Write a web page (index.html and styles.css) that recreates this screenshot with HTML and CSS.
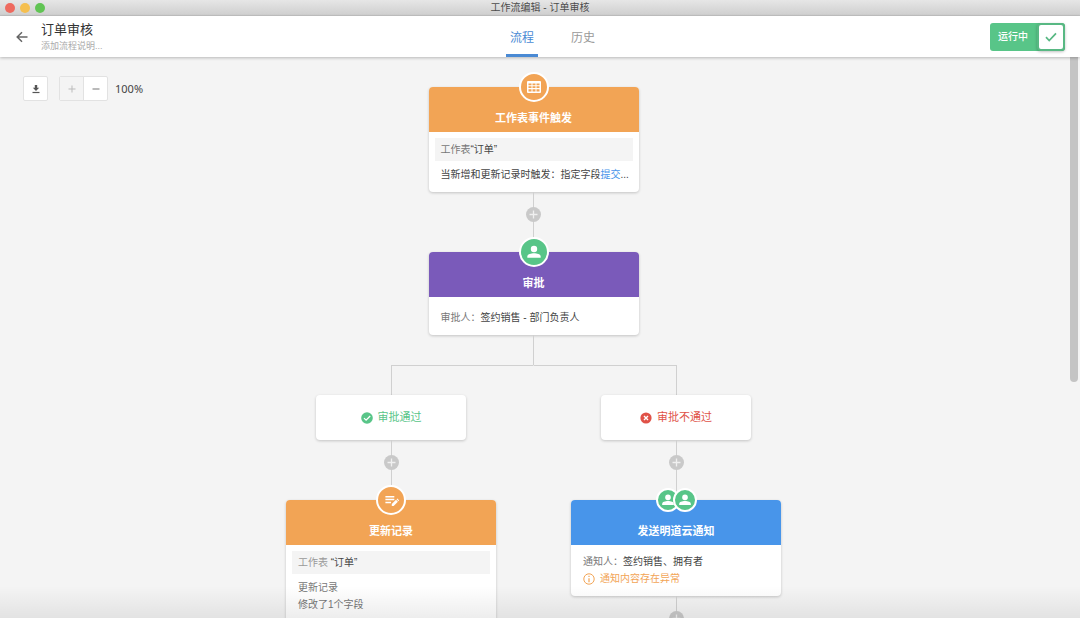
FILE: index.html
```html
<!DOCTYPE html>
<html lang="zh-CN">
<head>
<meta charset="utf-8">
<meta name="viewport" content="width=device-width, initial-scale=1">
<title>工作流编辑 - 订单审核</title>
<link rel="stylesheet" href="styles.css">
</head>
<body>
<svg class="sprite" aria-hidden="true">
  <symbol id="person" viewBox="0 0 24 24"><circle cx="12" cy="7.500" r="4.800"/><path d="M2 20.500v-1.800c0-3.400 5-5 10-5s10 1.600 10 5v1.800z"/></symbol>
  <symbol id="plus" viewBox="0 0 15 15"><path d="M7.500 3.500v8M3.500 7.500h8" fill="none" stroke="currentColor" stroke-width="1.300"/></symbol>
</svg>
<div class="window">
  <div class="titlebar">
    <div class="lights"><span class="light red"></span><span class="light yellow"></span><span class="light green"></span></div>
    <span class="window-title">工作流编辑 - 订单审核</span>
  </div>
  <header class="header">
    <div class="heading">
      <button class="back" aria-label="返回"><svg viewBox="0 0 12 12" width="12" height="12"><path d="M11.500 6H1.200M6 1.200 1.200 6 6 10.800" fill="none" stroke="currentColor" stroke-width="1.500"/></svg></button>
      <div>
        <h1 class="name">订单审核</h1>
        <p class="desc">添加流程说明...</p>
      </div>
    </div>
    <nav class="tabs"><a class="tab active" href="#flow">流程</a><a class="tab" href="#history">历史</a></nav>
    <button class="switch" role="switch" aria-checked="true"><span class="switch-label">运行中</span><span class="knob"><svg viewBox="0 0 12 10" width="12" height="10"><path d="M1 5.200 4.200 8.500 11 1.300" fill="none" stroke="currentColor" stroke-width="1.700"/></svg></span></button>
  </header>
  <main class="canvas" id="flow">
    <div class="tools">
      <button class="tool" aria-label="下载"><svg viewBox="0 0 10 10" width="10" height="10"><path d="M3.800 1h2.400v2.700h2L5 7 1.800 3.700h2z" fill="currentColor"/><path d="M1.500 8.500h7" stroke="currentColor" stroke-width="1.200"/></svg></button>
      <div class="zoom">
        <button class="zoom-btn" aria-label="放大" disabled><svg viewBox="0 0 10 10" width="10" height="10"><path d="M5 1.500v7M1.500 5h7" stroke="currentColor"/></svg></button>
        <button class="zoom-btn" aria-label="缩小"><svg viewBox="0 0 10 10" width="10" height="10"><path d="M1.500 5h7" stroke="currentColor" stroke-width="1.200"/></svg></button>
      </div>
      <span class="percent">100%</span>
    </div>

    <div class="flow">
      <article class="node">
        <div class="node-head orange">
          <div class="badges"><span class="badge orange"><svg viewBox="0 0 14 12" width="14" height="12"><rect width="14" height="12" rx="1" fill="currentColor"/><path d="M1.500 2.500h3v1.700h-3zM5.500 2.500h3v1.700h-3zM9.500 2.500h3v1.700h-3zM1.500 5.300h3V7h-3zM5.500 5.300h3V7h-3zM9.500 5.300h3V7h-3zM1.500 8.200h3v2.300h-3zM5.500 8.200h3v2.300h-3zM9.500 8.200h3v2.300h-3z" fill="#f2a455"/></svg></span></div>
          <h2 class="node-title">工作表事件触发</h2>
        </div>
        <div class="node-body sheet">
          <p class="source"><span class="label">工作表</span>“订单”</p>
          <p class="line">当新增和更新记录时触发：指定字段<a class="link" href="#field">提交</a>...</p>
        </div>
      </article>
      <div class="connector"><button class="add" aria-label="添加节点"><svg width="15" height="15"><use href="#plus"/></svg></button></div>
      <article class="node">
        <div class="node-head purple">
          <div class="badges"><span class="badge"><svg width="16" height="16" fill="currentColor"><use href="#person"/></svg></span></div>
          <h2 class="node-title">审批</h2>
        </div>
        <div class="node-body single">
          <p class="line"><span class="label">审批人：</span>签约销售 - 部门负责人</p>
        </div>
      </article>
      <div class="stem"></div>
      <div class="branches">
        <section class="branch">
          <div class="stem"></div>
          <div class="result pass"><svg viewBox="0 0 12 12" width="12" height="12"><circle cx="6" cy="6" r="5.800" fill="currentColor"/><path d="m3 6.100 2.100 2.100L9.200 4" fill="none" stroke="#fff" stroke-width="1.300"/></svg>审批通过</div>
          <div class="connector"><button class="add" aria-label="添加节点"><svg width="15" height="15"><use href="#plus"/></svg></button></div>
          <article class="node">
            <div class="node-head orange">
              <div class="badges"><span class="badge orange"><svg viewBox="0 0 16 16" width="15" height="15"><path d="M1.500 4h9.500M1.500 7h9.500M1.500 10h6" stroke="currentColor" stroke-width="1.600"/><path d="M8.300 11.800v2h2l4.500-4.500-2-2zM13.400 6.700l.8-.8 2 2-.8.8z" fill="currentColor"/></svg></span></div>
              <h2 class="node-title">更新记录</h2>
            </div>
            <div class="node-body sheet">
              <p class="source"><span class="label light-label">工作表</span> “订单”</p>
              <p class="line muted">更新记录</p>
              <p class="line muted">修改了1个字段</p>
            </div>
          </article>
        </section>
        <section class="branch">
          <div class="stem"></div>
          <div class="result reject"><svg viewBox="0 0 12 12" width="12" height="12"><circle cx="6" cy="6" r="5.600" fill="currentColor"/><path d="m4 4 4 4M8 4 4 8" stroke="#fff" stroke-width="1.400"/></svg>审批不通过</div>
          <div class="connector"><button class="add" aria-label="添加节点"><svg width="15" height="15"><use href="#plus"/></svg></button></div>
          <article class="node">
            <div class="node-head blue">
              <div class="badges pair"><span class="badge"><svg width="14" height="14" fill="currentColor"><use href="#person"/></svg></span><span class="badge"><svg width="14" height="14" fill="currentColor"><use href="#person"/></svg></span></div>
              <h2 class="node-title">发送明道云通知</h2>
            </div>
            <div class="node-body">
              <p class="line"><span class="label">通知人：</span>签约销售、拥有者</p>
              <p class="line warning"><svg viewBox="0 0 12 12" width="12" height="12"><circle cx="6" cy="6" r="5.200" fill="none" stroke="currentColor"/><path d="M6 2.800v1.300M6 5.200v4" stroke="currentColor" stroke-width="1.200"/></svg>通知内容存在异常</p>
            </div>
          </article>
          <div class="connector"><button class="add" aria-label="添加节点"><svg width="15" height="15"><use href="#plus"/></svg></button></div>
        </section>
      </div>
    </div>
    <div class="scroll-thumb"></div>
    <div class="shade"></div>
  </main>
</div>
</body>
</html>
```
FILE: styles.css
```css
* {
  box-sizing: border-box;
}

body {
  margin: 0;
  font-family: "Liberation Sans", "Noto Sans CJK SC", sans-serif;
  font-size: 10px;
  line-height: 17px;
  color: #444;
}

h1, h2, p {
  margin: 0;
  font-weight: 400;
}

button {
  margin: 0;
  padding: 0;
  border: 0;
  background: none;
  font: inherit;
  color: inherit;
}

a {
  text-decoration: none;
}

svg {
  display: block;
  flex: none;
}

.sprite {
  position: absolute;
  width: 0;
  height: 0;
}

.window {
  display: flex;
  flex-direction: column;
  height: 100vh;
  overflow: hidden;
}

.titlebar {
  display: grid;
  grid-template-columns: 1fr auto 1fr;
  align-items: center;
  height: 16px;
  flex: none;
  background: linear-gradient(#e6e6e6, #cfcfcf);
  border-bottom: 1px solid #c4c4c4;
}

.lights {
  display: flex;
  gap: 5px;
  padding-left: 5px;
}

.light {
  width: 10px;
  height: 10px;
  border-radius: 50%;
}

.red { background: #ee6a5f; }
.yellow { background: #f5bf4f; }
.green { background: #61c454; }

.window-title {
  line-height: 16px;
  color: #4c4c4c;
}

.header {
  position: relative;
  z-index: 2;
  display: grid;
  grid-template-columns: 1fr auto 1fr;
  align-items: center;
  height: 41px;
  flex: none;
  padding: 0 15px 0 16px;
  background: #fff;
  box-shadow: 0 1px 3px rgba(0, 0, 0, 0.25);
}

.heading {
  display: flex;
  align-items: center;
  gap: 13px;
}

.back {
  color: #666;
}

.name {
  font-size: 13px;
  line-height: 18px;
  color: #333;
}

.desc {
  font-size: 9px;
  line-height: 14px;
  color: #aaa;
}

.tabs {
  display: flex;
  gap: 29px;
  align-self: stretch;
  padding-left: 24px;
}

.tab {
  padding: 6px 4px 0;
  border-bottom: 3px solid transparent;
  font-size: 12px;
  line-height: 32px;
  color: #999;
}

.tab.active {
  border-color: #4a8ad4;
  color: #4a8ad4;
}

.switch {
  display: flex;
  align-items: center;
  justify-self: end;
  height: 28px;
  border-radius: 3px;
  background: #58c588;
  color: #fff;
}

.switch-label {
  padding: 0 9px 0 8px;
  font-weight: 500;
}

.knob {
  display: grid;
  place-items: center;
  width: 28px;
  height: 28px;
  border: 2px solid #58b883;
  border-radius: 4px;
  background: #fff;
  color: #58b883;
  box-shadow: 0 1px 3px rgba(0, 0, 0, 0.25);
}

.canvas {
  position: relative;
  flex: 1;
  min-height: 0;
  overflow: hidden;
  background: #f4f4f4;
}

.tools {
  position: absolute;
  top: 19px;
  left: 23px;
  display: flex;
  align-items: center;
}

.tool, .zoom {
  height: 25px;
  border: 1px solid #e2e2e2;
  border-radius: 2px;
  background: #fff;
}

.tool {
  display: grid;
  place-items: center;
  width: 25px;
  color: #555;
}

.zoom {
  display: flex;
  margin: 0 7px 0 11px;
  overflow: hidden;
}

.zoom-btn {
  display: grid;
  place-items: center;
  width: 23px;
  color: #777;
}

.zoom-btn:disabled {
  width: 24px;
  border-right: 1px solid #e2e2e2;
  background: #f4f4f4;
  color: #bbb;
}

.percent {
  font-family: "Noto Sans", sans-serif;
  font-size: 11px;
}

.flow {
  display: flex;
  flex-direction: column;
  align-items: center;
  padding: 30px 13px 0 0;
}

.node {
  width: 210px;
  flex: none;
  border-radius: 4px;
  background: #fff;
  box-shadow: 0 1px 3px rgba(0, 0, 0, 0.2);
}

.node-head {
  position: relative;
  height: 45px;
  padding-top: 23px;
  border-radius: 4px 4px 0 0;
  color: #fff;
}

.orange { background: #f2a455; }
.purple { background: #7a5aba; }
.blue { background: #4895ea; }

.node-title {
  font-size: 11px;
  font-weight: 700;
  text-align: center;
}

.badges {
  position: absolute;
  top: -15px;
  left: 0;
  right: 0;
  display: flex;
  justify-content: center;
}

.badge {
  display: grid;
  place-items: center;
  width: 30px;
  height: 30px;
  border: 2px solid #fff;
  border-radius: 50%;
  background-color: #58c588;
}

.badge.orange {
  background-color: #f2a455;
}

.pair {
  top: -12px;
}

.pair .badge {
  width: 24px;
  height: 24px;
}

.pair .badge + .badge {
  margin-left: -7px;
}

.node-body {
  padding: 8px 12px 9px;
}

.node-body.sheet {
  padding: 6px 6px 9px;
}

.node-body.single {
  padding-top: 12px;
}

.source {
  margin-bottom: 5px;
  padding: 3px 6px;
  background: #f4f4f4;
}

.line {
  display: flex;
  align-items: center;
  white-space: pre;
}

.sheet .line {
  padding-left: 6px;
}

.label, .muted {
  color: #777;
}

.light-label {
  color: #999;
}

.link {
  color: #4895ea;
}

.warning {
  gap: 5px;
  color: #f2a455;
}

.connector, .stem {
  background: linear-gradient(#d0d0d0, #d0d0d0) center / 1px 100% no-repeat;
}

.connector {
  display: flex;
  justify-content: center;
  width: 15px;
  height: 60px;
  padding-top: 15px;
}

.add {
  width: 15px;
  height: 15px;
  border-radius: 50%;
  background: #c9c9c9;
  color: #f0f0f0;
}

.stem {
  width: 15px;
  height: 30px;
}

.branches {
  display: flex;
}

.branch {
  display: flex;
  flex-direction: column;
  align-items: center;
  width: 285px;
  background: linear-gradient(#d0d0d0, #d0d0d0) right top / 50% 1px no-repeat;
}

.branch + .branch {
  background-position: left top;
}

.result {
  display: flex;
  align-items: center;
  justify-content: center;
  gap: 5px;
  width: 150px;
  height: 45px;
  border-radius: 4px;
  background: #fff;
  box-shadow: 0 1px 3px rgba(0, 0, 0, 0.2);
  font-size: 11px;
}

.pass { color: #58c588; }
.reject { color: #e05248; }

.scroll-thumb {
  position: absolute;
  top: 0;
  right: 2px;
  width: 8px;
  height: 58%;
  border-radius: 0 0 4px 4px;
  background: #c4c4c4;
}

.shade {
  position: absolute;
  right: 0;
  bottom: 0;
  left: 0;
  height: 32px;
  background: linear-gradient(transparent, rgba(0, 0, 0, 0.07));
  pointer-events: none;
}
```
